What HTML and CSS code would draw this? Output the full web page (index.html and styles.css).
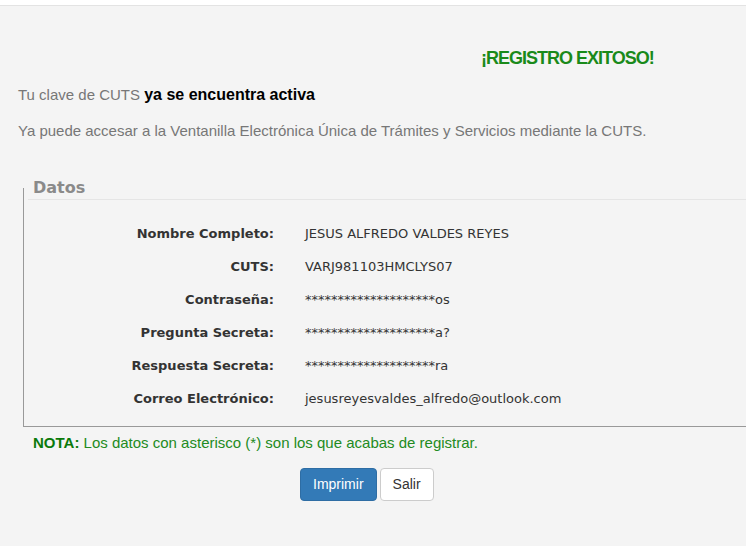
FILE: index.html
```html
<!DOCTYPE html>
<html lang="es">
<head>
<meta charset="utf-8">
<title>Registro exitoso</title>
<link rel="stylesheet" href="styles.css">
</head>
<body>
<div class="topbar"></div>
<main class="page">
  <div class="title-row"><h2 class="title">¡REGISTRO EXITOSO!</h2></div>
  <p class="lead">Tu clave de CUTS <strong>ya se encuentra activa</strong></p>
  <p class="info">Ya puede accesar a la Ventanilla Electrónica Única de Trámites y Servicios mediante la CUTS.</p>
  <fieldset class="datos">
    <legend>Datos</legend>
    <div class="grid">
      <div class="lbl">Nombre Completo:</div><div class="val">JESUS ALFREDO VALDES REYES</div>
      <div class="lbl">CUTS:</div><div class="val">VARJ981103HMCLYS07</div>
      <div class="lbl">Contraseña:</div><div class="val">********************os</div>
      <div class="lbl">Pregunta Secreta:</div><div class="val">********************a?</div>
      <div class="lbl">Respuesta Secreta:</div><div class="val">********************ra</div>
      <div class="lbl">Correo Electrónico:</div><div class="val">jesusreyesvaldes_alfredo@outlook.com</div>
    </div>
  </fieldset>
  <p class="nota"><strong>NOTA:</strong> Los datos con asterisco (*) son los que acabas de registrar.</p>
  <div class="actions">
    <button class="btn btn-primary" type="button">Imprimir</button>
    <button class="btn btn-default" type="button">Salir</button>
  </div>
</main>
</body>
</html>
```
FILE: styles.css
```css
html, body {
  margin: 0;
  padding: 0;
  background: #f4f4f4;
  overflow: hidden;
  font-family: "Liberation Sans", Arial, sans-serif;
  font-size: 15px;
  color: #777;
}
.topbar {
  height: 5px;
  background: #fff;
  border-bottom: 1px solid #e3e3e3;
}
.page {
  padding-left: 18px;
}
.title-row {
  display: flex;
  padding-left: 463px;
  padding-top: 40px;
}
.title {
  margin: 0;
  font-size: 18px;
  line-height: 24px;
  font-weight: bold;
  color: #1a8a1a;
  letter-spacing: -1px;
}
.lead {
  margin: 15px 0 0;
  line-height: 20px;
}
.lead strong {
  color: #000;
  font-size: 16px;
}
.info {
  margin: 16px 0 0;
  line-height: 20px;
}
.datos {
  margin: 35px 0 0 5px;
  width: 760px;
  padding: 0 0 11px 4px;
  border: 1px solid #999;
  border-top: none;
}
.datos legend {
  width: 100%;
  box-sizing: border-box;
  padding: 0 0 0 5px;
  margin: 0;
  border-bottom: 1px solid #e5e5e5;
  font-family: "DejaVu Sans", Verdana, sans-serif;
  font-size: 16px;
  line-height: 23px;
  font-weight: bold;
  color: #8a8a8a;
}
.grid {
  display: grid;
  grid-template-columns: 246px auto;
  column-gap: 31px;
  padding-top: 17px;
  font-family: "DejaVu Sans", Verdana, sans-serif;
  font-size: 13px;
  color: #333;
}
.lbl, .val {
  line-height: 33px;
}
.lbl {
  text-align: right;
  font-weight: bold;
}
.nota {
  margin: 6px 0 0 15px;
  color: #228b22;
  line-height: 20px;
}
.nota strong {
  color: #0a7a0a;
}
.actions {
  display: flex;
  gap: 3px;
  padding-left: 282px;
  margin-top: 15px;
}
.btn {
  font-family: "Liberation Sans", Arial, sans-serif;
  font-size: 14px;
  line-height: 19px;
  padding: 6px 12px;
  border-radius: 4px;
  border: 1px solid;
  cursor: pointer;
}
.btn-primary {
  background: #337ab7;
  border-color: #2e6da4;
  color: #fff;
}
.btn-default {
  background: #fff;
  border-color: #ccc;
  color: #333;
}
```
